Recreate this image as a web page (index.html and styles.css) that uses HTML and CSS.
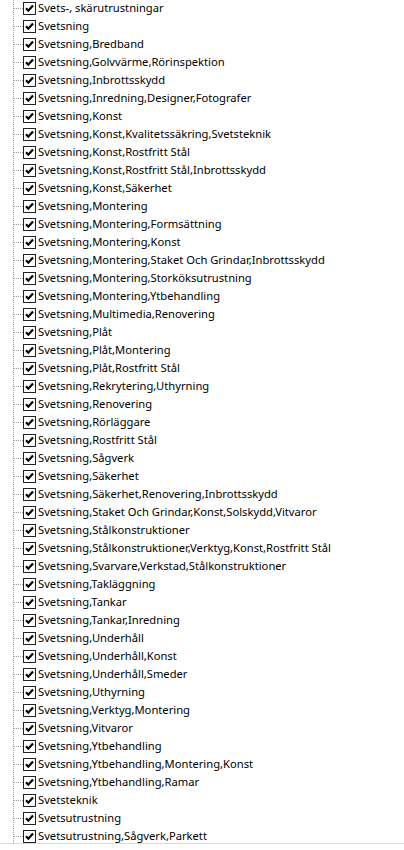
FILE: index.html
```html
<!DOCTYPE html>
<html>
<head>
<meta charset="utf-8">
<link rel="stylesheet" href="styles.css">
</head>
<body>
<div class="tree">
  <ul class="list" id="list"></ul>
</div>
<script src="app.js"></script>
</body>
</html>
```
FILE: styles.css
```css
html, body { margin: 0; padding: 0; background: #ffffff; }
.tree {
  height: 843px;
  border-bottom: 1px solid #dadada;
  overflow: hidden;
  font-family: "Noto Sans", sans-serif;
  font-size: 11.2px;
  color: #000;
}
.list {
  list-style: none;
  margin: -1px 0 0 13px;
  padding: 0;
  height: 844px;
  border-left: 1px dotted #a0a0a0;
}
.row {
  display: flex;
  align-items: center;
  height: 18px;
  white-space: nowrap;
}
.conn {
  width: 9px;
  border-top: 1px dotted #a0a0a0;
  flex: none;
}
.box { width: 13px; height: 13px; flex: none; display: block; }
.label { margin-left: 2px; line-height: 18px; }
```
FILE: app.js
```js
var items = [
"Svets-, skärutrustningar","Svetsning","Svetsning,Bredband","Svetsning,Golvvärme,Rörinspektion","Svetsning,Inbrottsskydd","Svetsning,Inredning,Designer,Fotografer","Svetsning,Konst","Svetsning,Konst,Kvalitetssäkring,Svetsteknik","Svetsning,Konst,Rostfritt Stål","Svetsning,Konst,Rostfritt Stål,Inbrottsskydd","Svetsning,Konst,Säkerhet","Svetsning,Montering","Svetsning,Montering,Formsättning","Svetsning,Montering,Konst","Svetsning,Montering,Staket Och Grindar,Inbrottsskydd","Svetsning,Montering,Storköksutrustning","Svetsning,Montering,Ytbehandling","Svetsning,Multimedia,Renovering","Svetsning,Plåt","Svetsning,Plåt,Montering","Svetsning,Plåt,Rostfritt Stål","Svetsning,Rekrytering,Uthyrning","Svetsning,Renovering","Svetsning,Rörläggare","Svetsning,Rostfritt Stål","Svetsning,Sågverk","Svetsning,Säkerhet","Svetsning,Säkerhet,Renovering,Inbrottsskydd","Svetsning,Staket Och Grindar,Konst,Solskydd,Vitvaror","Svetsning,Stålkonstruktioner","Svetsning,Stålkonstruktioner,Verktyg,Konst,Rostfritt Stål","Svetsning,Svarvare,Verkstad,Stålkonstruktioner","Svetsning,Takläggning","Svetsning,Tankar","Svetsning,Tankar,Inredning","Svetsning,Underhåll","Svetsning,Underhåll,Konst","Svetsning,Underhåll,Smeder","Svetsning,Uthyrning","Svetsning,Verktyg,Montering","Svetsning,Vitvaror","Svetsning,Ytbehandling","Svetsning,Ytbehandling,Montering,Konst","Svetsning,Ytbehandling,Ramar","Svetsteknik","Svetsutrustning","Svetsutrustning,Sågverk,Parkett"
];
var list = document.getElementById('list');
var svg = '<svg class="box" viewBox="0 0 13 13"><rect x="0.5" y="0.5" width="12" height="12" fill="#fff" stroke="#222"/><path d="M3 6.2 L5.3 8.7 L10 3.4" fill="none" stroke="#000" stroke-width="2.2"/></svg>';
items.forEach(function (t) {
  var li = document.createElement('li');
  li.className = 'row';
  li.innerHTML = '<span class="conn"></span>' + svg + '<span class="label"></span>';
  li.querySelector('.label').textContent = t;
  list.appendChild(li);
});
```
